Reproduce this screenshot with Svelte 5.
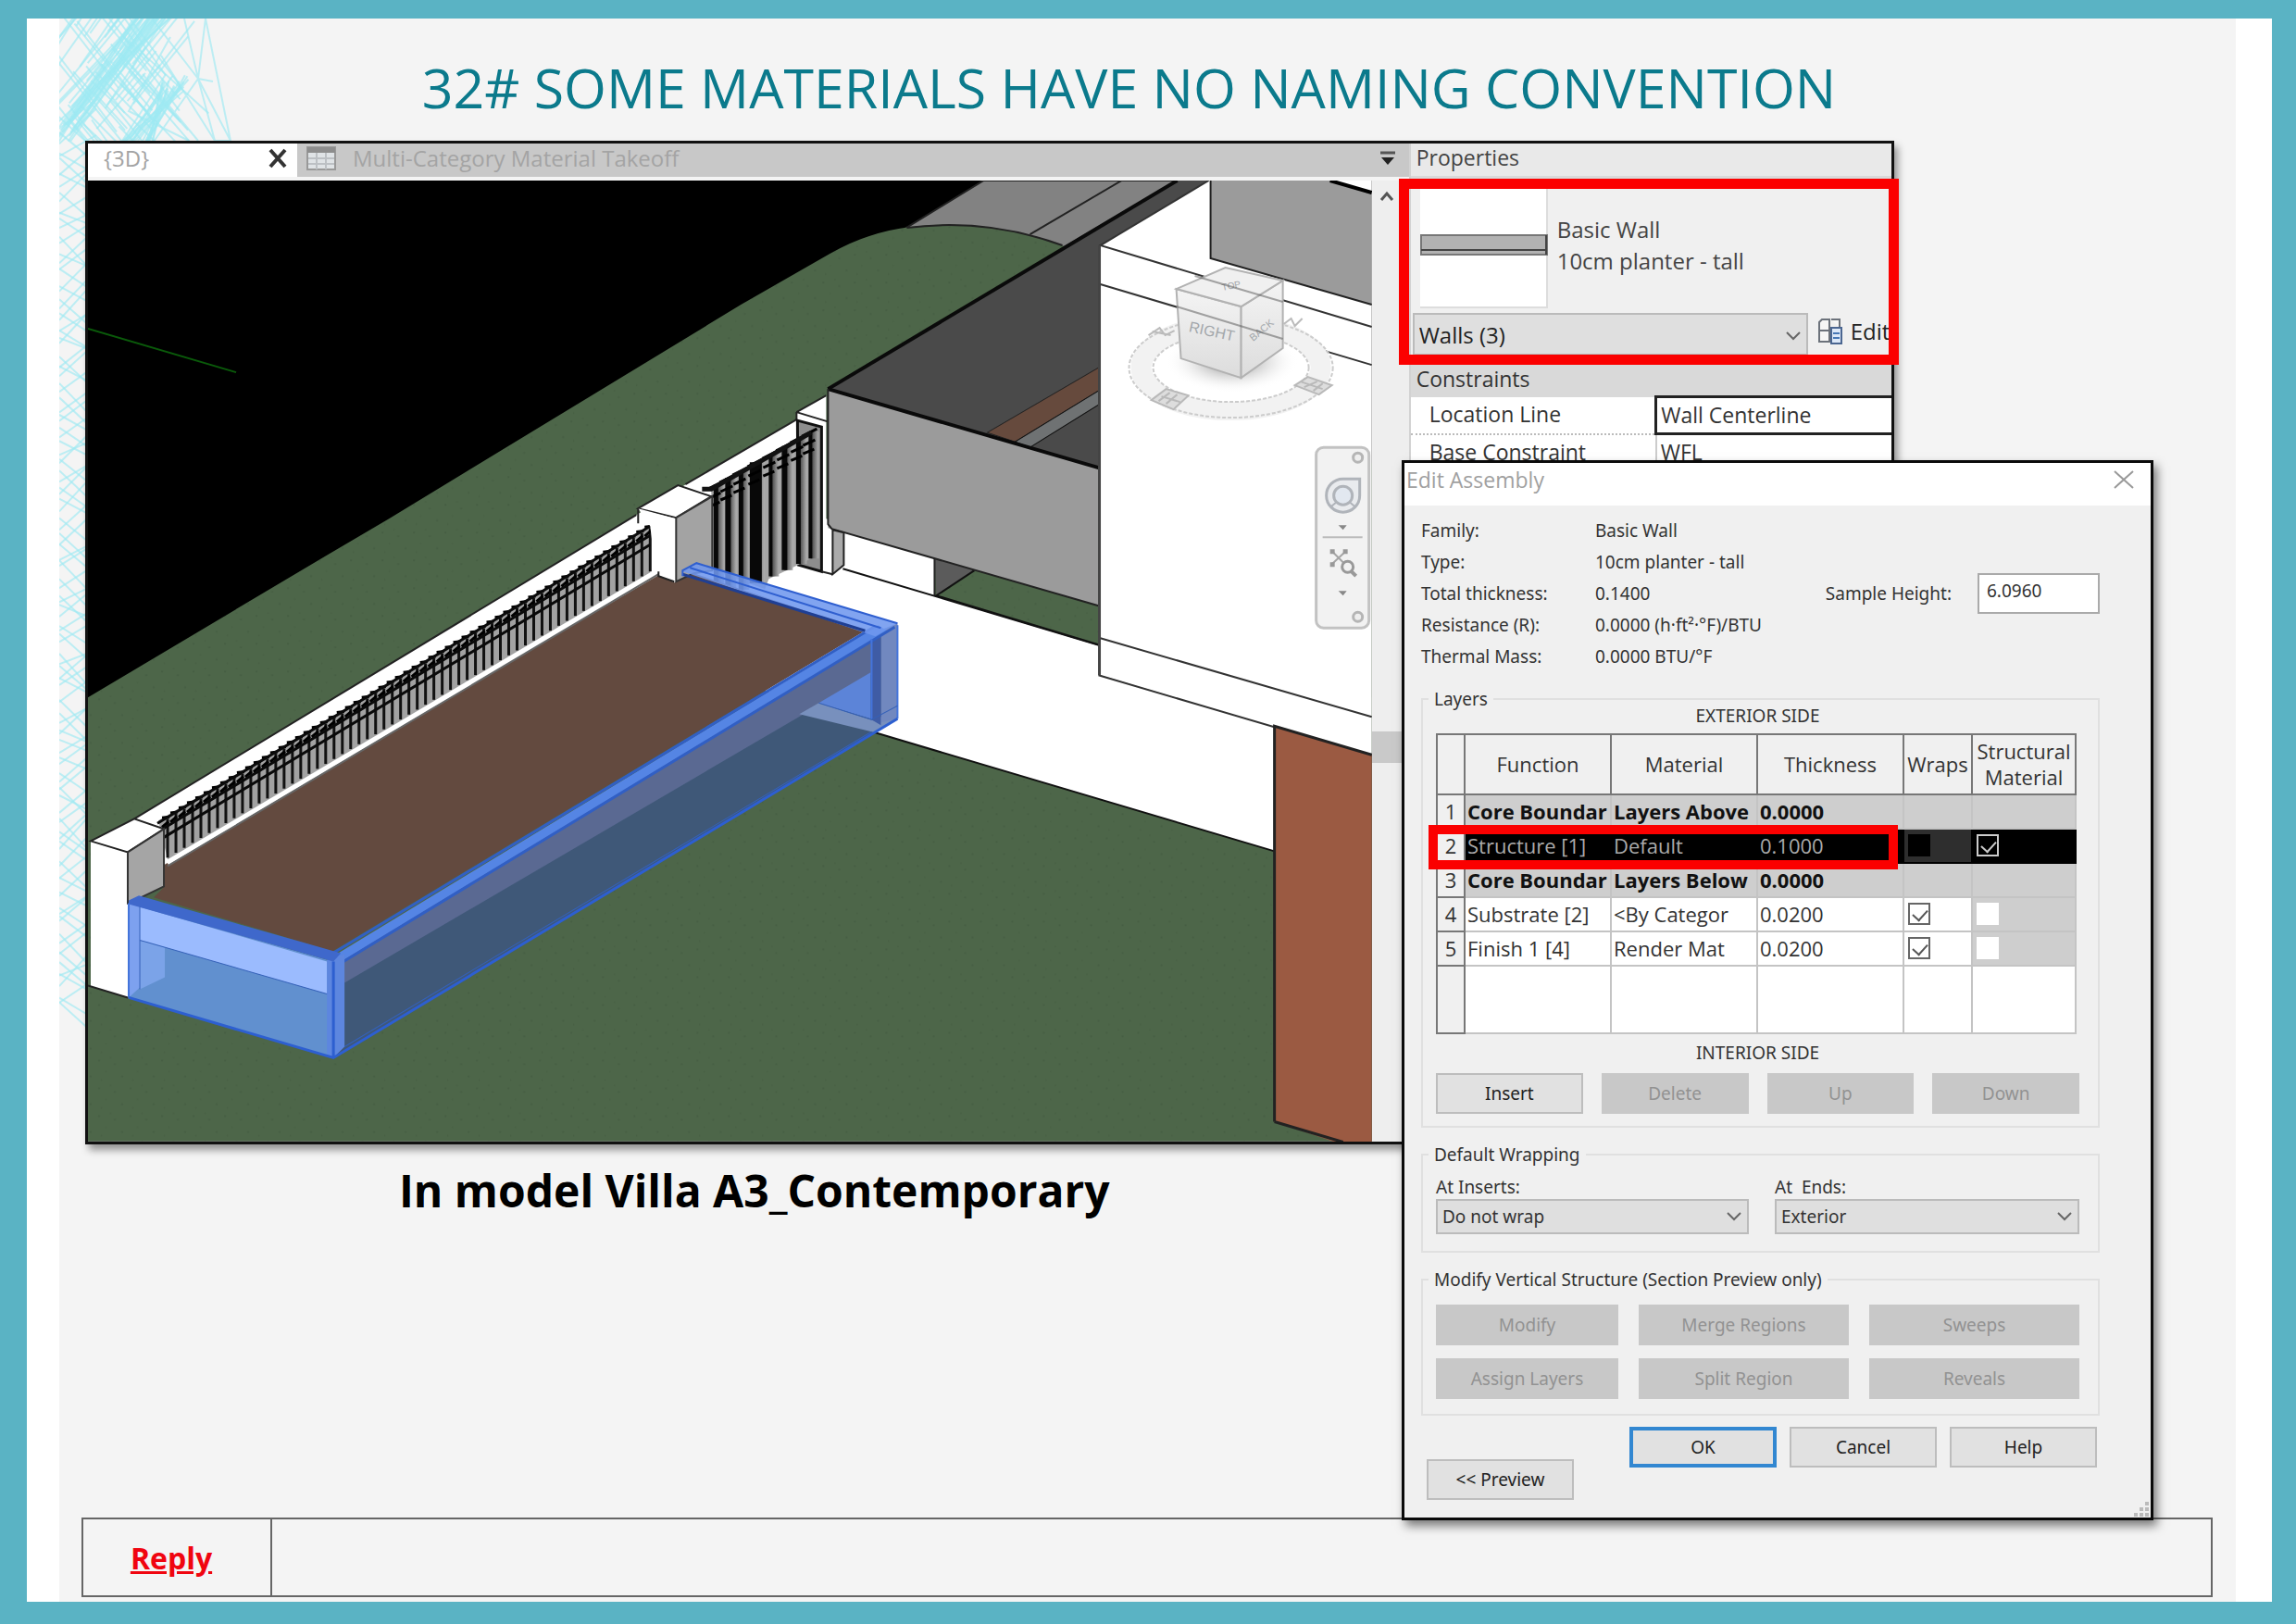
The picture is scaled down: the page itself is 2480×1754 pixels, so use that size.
<script>
  let wrapInserts = 'Do not wrap';
  let wrapEnds = 'Exterior';
  let category = 'Walls (3)';
  let sampleHeight = '6.0960';

  const info = [
    { label: 'Family:', value: 'Basic Wall' },
    { label: 'Type:', value: '10cm planter - tall' },
    { label: 'Total thickness:', value: '0.1400' },
    { label: 'Resistance (R):', value: '0.0000 (h·ft²·°F)/BTU' },
    { label: 'Thermal Mass:', value: '0.0000 BTU/°F' }
  ];

  const layers = [
    { id: 1, fn: 'Core Boundar', material: 'Layers Above', thickness: '0.0000', kind: 'core' },
    { id: 2, fn: 'Structure [1]', material: 'Default', thickness: '0.1000', kind: 'selected', wraps: false, structural: true },
    { id: 3, fn: 'Core Boundar', material: 'Layers Below', thickness: '0.0000', kind: 'core' },
    { id: 4, fn: 'Substrate [2]', material: '<By Categor', thickness: '0.0200', kind: 'plain', wraps: true, structural: false },
    { id: 5, fn: 'Finish 1 [4]', material: 'Render Mat', thickness: '0.0200', kind: 'plain', wraps: true, structural: false }
  ];

  const layerButtons = ['Insert', 'Delete', 'Up', 'Down'];
  const regionButtons = ['Modify', 'Merge Regions', 'Sweeps', 'Assign Layers', 'Split Region', 'Reveals'];

  // small repeatable generator for the decorative line mesh
  let seed = 11;
  const rnd = () => {
    seed = (seed * 16807) % 2147483647;
    return seed / 2147483647;
  };

  const mesh = [];
  for (let i = 0; i < 70; i++) {
    const x = rnd() * 100 - 20;
    const y = rnd() * 140 - 20;
    const len = 50 + rnd() * 80;
    const down = i % 2 ? 0.9 + rnd() * 0.5 : -1.1 - rnd() * 0.5;
    mesh.push([x, y, x + len * 0.7, y + len * down * 0.7]);
  }
  // two denser bundles crossing the corner
  for (let i = 0; i < 22; i++) {
    mesh.push([80 + rnd() * 40, 0, rnd() * 30 - 10, 90 + rnd() * 50]);
    mesh.push([110 + rnd() * 30, 60 + rnd() * 20, 60 + rnd() * 40, 140]);
  }
  for (let i = 0; i < 120; i++) {
    const y = 110 + i * 8 + rnd() * 12;
    const rise = (i % 2 ? 1 : -1) * (15 + rnd() * 30);
    mesh.push([0, y, 40, y + rise]);
  }

  // railing along the planter
  const rails = [];
  for (let i = 0; i <= 58; i++) {
    const t = i / 58;
    rails.push({ x: 181 + t * 521, top: 884 - t * 314, bottom: 926 - t * 309 });
  }

  // railing between the two far pillars
  const bars = [
    { x: 773, w: 5 },
    { x: 786, w: 6 },
    { x: 800, w: 5 },
    { x: 816, w: 13 },
    { x: 832, w: 4 },
    { x: 847, w: 6 },
    { x: 862, w: 5 },
    { x: 875, w: 4 }
  ].map((bar) => ({
    ...bar,
    top: 466 + (875 - bar.x) * 0.56,
    bottom: 603 + (875 - bar.x) * 0.45
  }));
</script>

<main class="page">
  <div class="sheet">
    <div class="slide">
      <svg class="mesh" viewBox="0 0 200 1160" aria-hidden="true">
        {#each mesh as [x1, y1, x2, y2]}
          <line {x1} {y1} {x2} {y2} />
        {/each}
        <path d="M135 0 L150 65 L168 132 L185 132 L158 0 L150 65 L185 132 M150 65 L90 150 M150 65 L166 68 M110 40 L168 132 M90 60 L150 132 M120 20 L75 100 L140 132 M150 65 L100 0" />
      </svg>

      <h1>32# SOME MATERIALS HAVE NO NAMING CONVENTION</h1>

      <section class="window" aria-label="Model view">
        <div class="view">
          <div class="tabs">
            <div class="tab active">
              <span>{'{3D}'}</span>
              <button class="close" aria-label="Close tab">
                <svg viewBox="0 0 22 22" width="22" height="22"><path d="M3 2 L19 20 M19 2 L3 20" /></svg>
              </button>
            </div>
            <div class="tab">
              <svg class="sheet-icon" viewBox="0 0 32 26" width="32" height="26">
                <rect x="1" y="1" width="30" height="24" fill="#dfe3e6" stroke="#999" stroke-width="2" />
                <rect x="1" y="1" width="30" height="6" fill="#8d8d8d" />
                <path d="M2 13 H30 M2 19 H30 M11 7 V25 M21 7 V25" stroke="#bcc0c4" stroke-width="2" />
              </svg>
              <span>Multi-Category Material Takeoff</span>
            </div>
            <button class="tab-menu" aria-label="Open tab list">
              <svg viewBox="0 0 18 18" width="18" height="18"><path d="M1 3 H17" stroke="#555" stroke-width="3" /><path d="M2 8 H16 L9 16 Z" fill="#222" /></svg>
            </button>
          </div>

          <div class="canvas">
            <svg class="scene" viewBox="95 195 1386 1037" preserveAspectRatio="xMidYMid slice" role="img" aria-label="3D view of villa with selected planter walls">
              <defs>
                <pattern id="grass" width="34" height="30" patternUnits="userSpaceOnUse">
                  <rect width="34" height="30" fill="#4d6649" />
                  <path d="M4 5h2M21 9h2M12 17h1M29 22h2M7 26h1M17 2h1" stroke="#465e43" stroke-width="2" />
                </pattern>
                <radialGradient id="shade">
                  <stop offset="0" stop-color="#777" />
                  <stop offset="1" stop-color="#fff" stop-opacity="0" />
                </radialGradient>
                <linearGradient id="face" x1="0" y1="0" x2="0" y2="1">
                  <stop offset="0" stop-color="#f4f4f4" />
                  <stop offset="1" stop-color="#dcdcdc" />
                </linearGradient>
                <linearGradient id="post" x1="0" y1="0" x2="1" y2="0">
                  <stop offset="0" stop-color="#333" />
                  <stop offset="1" stop-color="#b0b0b0" />
                </linearGradient>
              </defs>

              <rect x="95" y="195" width="1386" height="1037" fill="#000" />
              <path d="M95 355 L255 402" stroke="#0a5a0a" stroke-width="2" />

              <!-- lawn and road -->
              <path d="M1089 195 L975 248 L1147 268 L1271 195 Z" fill="#828282" />
              <path d="M1062 195 L975 248 L1147 268 L1271 195 Z" fill="#828282" stroke="#222" stroke-width="2" />
              <path d="M1211 195 L1112 253" stroke="#222" stroke-width="2" />
              <path d="M95 753 L352 600 L420 560 L800 329 L896 274 Q938 250 984 245 Q1065 235 1147 265 L1220 300 L1481 500 V1232 H95 Z" fill="url(#grass)" />
              <path d="M979 246 Q1065 235 1147 265" fill="none" stroke="#222" stroke-width="2" />

              <!-- roof recess -->
              <path d="M1271 195 H1305 L1188 265 L1188 505 L894 420 Z" fill="#4a4a4a" />
              <path d="M1271 195 L894 420" stroke="#0a0a0a" stroke-width="4" />
              <path d="M1066 467 L1186 397 V422 L1096 477 Z" fill="#664a3d" stroke="#222" />
              <path d="M1096 477 L1186 422 V437 L1112 483 Z" fill="#6f7273" stroke="#111" />

              <!-- boundary wall -->
              <path d="M740 523 L860 453 V445 L892 427 V560 L1009 600 V643 L1188 697 V729 L1376 784 V919 L945 791 L760 720 Z" fill="#fff" />
              <path d="M145 884 L687 556 L742 522 V640 L177 940 Z" fill="#fff" />
              <path d="M145 884 L687 556 M740 523 L860 453 M860 445 L892 427" stroke="#222" stroke-width="2" />
              <path d="M910 614 L1188 697 M945 791 L1376 919" stroke="#111" stroke-width="2" />
              <path d="M1009 600 L1060 612 L1011 643 Z" fill="#5b5b5b" />
              <path d="M1009 600 V643" stroke="#222" stroke-width="2" />
              <path d="M1052 616 L1090 620 L1186 655 V696 L1011 643 Z" fill="url(#grass)" />
              <path d="M1052 616 L1011 643 L1186 696" fill="none" stroke="#111" stroke-width="2" />

              <path d="M894 420 L1186 505 V654 L894 570 Z" fill="#9b9b9b" />
              <path d="M894 420 L1186 505" stroke="#0a0a0a" stroke-width="4" />
              <path d="M894 420 V566 L898 571 L1186 654" fill="none" stroke="#222" stroke-width="2" />

              <!-- far railing -->
              <path d="M860 445 L893 455 M860 445 V453" stroke="#222" stroke-width="2" />
              <path d="M861 454 L887 461 V617 L862 610 Z" fill="#8d8d8d" stroke="#111" stroke-width="3" />
              <path d="M899 572 L911 575 V610 L899 620 Z" fill="#aaa" stroke="#222" stroke-width="2" />
              <path d="M887 617 L899 620" stroke="#222" stroke-width="2" />
              <path d="M768 528 L876 466 V603 L830 625 L826 636 L768 615 Z" fill="#a6a6a6" />
              {#each bars as bar}
                <rect x={bar.x} y={bar.top} width="9" height={bar.bottom - bar.top} fill="url(#post)" />
                <path d="M{bar.x} {bar.top} V{bar.bottom}" stroke="#080808" stroke-width={bar.w} />
                <path d="M{bar.x - 9} {bar.top + 5} l16 -8 M{bar.x - 8} {bar.top + 15} l13 -6 M{bar.x - 8} {bar.top + 24} l12 -5" stroke="#000" stroke-width="3" />
              {/each}
              <path d="M758 528 L768 528 L876 467" fill="none" stroke="#111" stroke-width="5" />

              <!-- right block -->
              <path d="M1188 265 L1305 195 H1481 V816 L1188 729 Z" fill="#fff" />
              <path d="M1307 195 H1436 L1481 208 V329 L1307 279 Z" fill="#9b9b9b" />
              <path d="M1307 195 V279 L1481 329" fill="none" stroke="#222" stroke-width="2" />
              <path d="M1436 195 L1481 208" stroke="#000" stroke-width="4" />
              <path d="M1305 195 L1188 265 L1481 353 M1188 307 L1481 394 M1188 689 L1481 774 M1186 729 L1481 816" fill="none" stroke="#333" stroke-width="2" />
              <path d="M1187 265 V729" stroke="#444" stroke-width="3" />
              <path d="M1376 784 L1481 815 V1240 H1462 L1376 1211 Z" fill="#9b5a42" />
              <path d="M1376 1211 V784 L1481 815 M1376 1211 L1450 1233" fill="none" stroke="#222" stroke-width="3" />

              <!-- soil and near railing -->
              <path d="M177 958 V934 L711 621 L728 629 L749 619 L934 681 L359 1027 L166 969 Z" fill="#634a3f" />
              <path d="M171 886 L702 568 V618 L181 928 Z" fill="#a2a2a2" />
              {#each rails as rail}
                <path d="M{rail.x} {rail.top} V{rail.bottom}" stroke="#111" stroke-width="3" />
                <path d="M{rail.x - 6} {rail.top - 1} l8 -1 M{rail.x - 6} {rail.top + 9} l7 -6" stroke="#000" stroke-width="3" />
              {/each}
              <path d="M170 889 L702 568 M174 896 L702 578 M177 904 L702 588" stroke="#0a0a0a" stroke-width="3" />
              <path d="M181 932 L711 617" stroke="#fff" stroke-width="4" />
              <path d="M181 935 L711 620" stroke="#666" stroke-width="2" />

              <path d="M689 549 L732 524 L768 536 L730 559 Z" fill="#fff" stroke="#222" stroke-width="2" />
              <path d="M689 549 L730 560 V628 L708 617 L702 568 Z" fill="#fff" />
              <path d="M730 559 L769 536 V616 L749 619 L730 628 Z" fill="#a3a3a3" stroke="#333" stroke-width="2" />
              <path d="M689 549 V565 M711 617 V622 L728 628" fill="none" stroke="#222" stroke-width="2" />

              <path d="M98 908 L138 920 V1077 L98 1065 Z" fill="#fff" />
              <path d="M98 908 L145 884 L177 895 L138 920 Z" fill="#fff" stroke="#222" stroke-width="2" />
              <path d="M138 920 L177 895 V957 L150 970 L138 975 Z" fill="#a5a5a5" stroke="#333" stroke-width="2" />
              <path d="M95 1064 L138 1077" stroke="#222" stroke-width="2" />

              <!-- selected planter -->
              <path d="M360 1038 L969 675 V776 L360 1142 Z" fill="#3f5878" />
              <path d="M370 1034 L943 692 V727 L372 1061 Z" fill="#5a6992" />
              <path d="M884 759 L940 726 V776 Z" fill="#5c84d8" />
              <path d="M863 771 L884 759 L943 778 L969 765 V776 L945 791 Z" fill="#7890bd" />
              <path d="M951 680 L969 673 V776 L951 780 Z" fill="#7188bf" />
              <path d="M941 687 H951 V783 L941 777 Z" fill="#3f5ca5" />
              <path d="M357 1034 L948 675 L958 681 L362 1042 Z" fill="#5585e4" />
              <path d="M358 1030 L945 676 M366 1041 L966 677" stroke="#315fc4" stroke-width="3" />
              <path d="M737 617 L752 608 L969 673 L945 687 Z" fill="#6f97ee" opacity=".88" />
              <path d="M737 620 L934 681" stroke="#1f3f94" stroke-width="3" />
              <path d="M737 622 V616 L752 608 L969 673 M745 613 L951 678" fill="none" stroke="#2f5fd0" stroke-width="2" />
              <path d="M139 975 L360 1038 V1142 L139 1077 Z" fill="#6190cf" />
              <path d="M139 975 L151 979 V1066 L139 1077 Z" fill="#7da1ef" />
              <path d="M151 1015 L178 1023 V1055 L151 1068 Z" fill="#7ba3e8" />
              <path d="M151 979 L353 1038 V1073 L151 1015 Z" fill="#9bbbfe" />
              <path d="M353 1036 L372 1030 V1130 L360 1142 L353 1138 Z" fill="#5d86df" />
              <path d="M139 972 L150 967 L368 1029 L360 1038 L139 976 Z" fill="#3f68cb" />
              <path d="M139 975 V1077 M969 776 V675 M941 690 V777" fill="none" stroke="#4474dc" stroke-width="2" />
              <path d="M139 1077 L360 1142 L969 776 M360 1038 V1142" fill="none" stroke="#2d5fd0" stroke-width="3" />
              <path d="M372 1130 L941 790 M151 979 V1068 M353 1073 L151 1015 M884 759 L941 777 L969 762" fill="none" stroke="#3561b8" stroke-width="1" />

              <!-- view cube -->
              <ellipse cx="1329" cy="397" rx="97" ry="46" fill="none" stroke="#f2f2f2" stroke-width="22" />
              <ellipse cx="1329" cy="397" rx="110" ry="54" fill="none" stroke="#ccc" stroke-width="2" stroke-dasharray="4 2" />
              <ellipse cx="1329" cy="397" rx="84" ry="37" fill="#fff" stroke="#ccc" stroke-width="2" stroke-dasharray="4 2" />
              <ellipse cx="1330" cy="390" rx="72" ry="34" fill="url(#shade)" />
              <path d="M1270 312 L1340 331 V408 L1275 387 Z" fill="url(#face)" stroke="#b2b2b2" stroke-width="2" />
              <path d="M1340 331 L1385 303 V376 L1340 408 Z" fill="url(#face)" stroke="#b2b2b2" stroke-width="2" />
              <path d="M1270 312 L1323 289 L1385 303 L1340 331 Z" fill="#f0f0f0" stroke="#b2b2b2" stroke-width="2" />
              <text class="cube" x="1283" y="358" font-size="16" transform="rotate(12 1283 358)">RIGHT</text>
              <text class="cube" x="1353" y="369" font-size="11" transform="rotate(-40 1353 369)">BACK</text>
              <text class="cube" x="1320" y="314" font-size="10" transform="rotate(-12 1320 314)">TOP</text>
              <path d="M1240 362 l12 -8 6 8 10 -5 M1244 358 l20 4 M1386 350 l8 -6 4 8 8 -8" fill="none" stroke="#bbb" stroke-width="2" />
              <path d="M1243 432 L1259 420 L1283 427 L1267 442 Z M1251 433 l12 -9 M1259 436 l12 -10 M1254 428 l20 6" fill="#ddd" stroke="#b9b9b9" stroke-width="2" />
              <path d="M1398 416 L1412 407 L1438 416 L1424 426 Z M1408 418 l14 -6 M1418 422 l10 -8 M1404 412 l24 8" fill="#ddd" stroke="#b9b9b9" stroke-width="2" />
              <path d="M1270 331 L1385 366 M1290 298 L1385 326" stroke="#555" stroke-width="2" opacity=".5" />

              <!-- navigation bar -->
              <rect x="1421" y="483" width="57" height="195" rx="8" fill="#f2f2f2" stroke="#c2c2c2" stroke-width="3" />
              <circle cx="1466" cy="494" r="5" fill="#eee" stroke="#b5b5b5" stroke-width="3" />
              <circle cx="1466" cy="666" r="5" fill="#eee" stroke="#b5b5b5" stroke-width="3" />
              <path d="M1450 517 H1468 V535 A18 18 0 1 1 1450 517 Z" fill="#e9ebee" stroke="#b0b4ba" stroke-width="3" />
              <circle cx="1450" cy="535" r="10" fill="#e2e8f0" stroke="#b0b4ba" stroke-width="3" />
              <path d="M1437 547 l6 -5 M1463 547 l-6 -5" stroke="#b0b4ba" stroke-width="2" />
              <path d="M1445 567 h9 l-4 5 Z M1445 638 h9 l-4 5 Z" fill="#888" />
              <path d="M1428 580 H1471" stroke="#bbb" stroke-width="2" />
              <path d="M1439 596 L1452 609 M1452 596 L1438 609" stroke="#a5a5a5" stroke-width="2" />
              <path d="M1436 593h5v5h-5z M1450 593h5v5h-5z M1436 607h5v5h-5z" fill="#999" />
              <circle cx="1455" cy="612" r="6" fill="#f2f2f2" stroke="#999" stroke-width="3" />
              <path d="M1459 617 L1464 622" stroke="#999" stroke-width="4" />
            </svg>

            <div class="scroll">
              <button aria-label="Scroll up">
                <svg viewBox="0 0 16 12" width="16" height="12"><path d="M2 10 L8 3 L14 10" /></svg>
              </button>
              <span class="thumb"></span>
            </div>
          </div>
        </div>

        <aside class="properties">
          <h2>Properties</h2>
          <div class="type-block">
            <div class="type">
              <svg viewBox="0 0 138 136" width="138" height="136" aria-hidden="true">
                <rect width="138" height="136" fill="#fff" />
                <path d="M137 0 V135 H0" fill="none" stroke="#ddd" stroke-width="2" />
                <rect x="1" y="57" width="136" height="21" fill="#b2b2b2" stroke="#777" stroke-width="2" />
                <path d="M1 73 H137 M136 57 V78" stroke="#444" stroke-width="2" />
              </svg>
              <p>Basic Wall<br />10cm planter - tall</p>
            </div>
            <div class="category">
              <div class="pick">
                <select aria-label="Category" bind:value={category}>
                  <option>Walls (3)</option>
                </select>
                <svg viewBox="0 0 16 10" width="16" height="10"><path d="M1 1 L8 8 L15 1" /></svg>
              </div>
              <button class="edit-type">
                <svg viewBox="0 0 28 28" width="28" height="28">
                  <path d="M2 13 V4 L5 1 H13 V13 Z M15 1 H24 V10 M2 13 V25 H13 V13" fill="#f6f6f6" stroke="#6c727b" stroke-width="2" />
                  <rect x="15" y="10" width="11" height="17" fill="#dce8f8" stroke="#4b6691" stroke-width="2" />
                  <path d="M17 16 H24 M17 21 H24" stroke="#4777b5" stroke-width="2" />
                </svg>
                Edit
              </button>
            </div>
          </div>
          <table class="props">
            <colgroup><col class="c-name" /><col /></colgroup>
            <thead>
              <tr><th colspan="2">Constraints</th></tr>
            </thead>
            <tbody>
              <tr><td>Location Line</td><td class="focus">Wall Centerline</td></tr>
              <tr><td>Base Constraint</td><td>WFL</td></tr>
            </tbody>
          </table>
        </aside>
      </section>

      <p class="caption">In model Villa A3_Contemporary</p>

      <section class="dialog" aria-label="Edit Assembly">
        <header>
          <h2>Edit Assembly</h2>
          <button aria-label="Close">
            <svg viewBox="0 0 22 20" width="22" height="20"><path d="M1 1 L21 19 M21 1 L1 19" /></svg>
          </button>
        </header>

        <div class="body">
          <div class="summary">
            <dl>
              {#each info as row}
                <dt>{row.label}</dt>
                <dd>{row.value}</dd>
              {/each}
            </dl>
            <label>Sample Height: <input type="text" bind:value={sampleHeight} /></label>
          </div>

          <fieldset class="layers">
            <legend>Layers</legend>
            <p class="side">EXTERIOR SIDE</p>
            <div class="grid-wrap">
              <table class="grid">
                <colgroup>
                  <col class="c-id" /><col class="c-wide" /><col class="c-wide" /><col class="c-wide" /><col class="c-wraps" /><col />
                </colgroup>
                <thead>
                  <tr>
                    <th></th><th>Function</th><th>Material</th><th>Thickness</th><th>Wraps</th><th>Structural Material</th>
                  </tr>
                </thead>
                <tbody>
                  {#each layers as layer}
                    <tr class={layer.kind}>
                      <th>{layer.id}</th>
                      <td>{layer.fn}</td>
                      <td>{layer.material}</td>
                      <td>{layer.thickness}</td>
                      <td class="wraps">
                        {#if layer.kind !== 'core'}
                          <input type="checkbox" aria-label="Wraps, layer {layer.id}" bind:checked={layer.wraps} />
                        {/if}
                      </td>
                      <td class="structural">
                        {#if layer.kind !== 'core'}
                          <input type="checkbox" aria-label="Structural material, layer {layer.id}" bind:checked={layer.structural} />
                        {/if}
                      </td>
                    </tr>
                  {/each}
                  <tr class="empty"><th></th><td></td><td></td><td></td><td></td><td></td></tr>
                </tbody>
              </table>
              <span class="marker"></span>
            </div>
            <p class="side">INTERIOR SIDE</p>
            <div class="row four">
              {#each layerButtons as name, i}
                <button class="btn" disabled={i > 0}>{name}</button>
              {/each}
            </div>
          </fieldset>

          <fieldset class="wrapping">
            <legend>Default Wrapping</legend>
            <div class="row two">
              <div class="field">
                <label for="at-inserts">At Inserts:</label>
                <div class="pick">
                  <select id="at-inserts" bind:value={wrapInserts}><option>Do not wrap</option></select>
                  <svg viewBox="0 0 16 10" width="16" height="10"><path d="M1 1 L8 8 L15 1" /></svg>
                </div>
              </div>
              <div class="field">
                <label for="at-ends">At&nbsp; Ends:</label>
                <div class="pick">
                  <select id="at-ends" bind:value={wrapEnds}><option>Exterior</option></select>
                  <svg viewBox="0 0 16 10" width="16" height="10"><path d="M1 1 L8 8 L15 1" /></svg>
                </div>
              </div>
            </div>
          </fieldset>

          <fieldset class="vertical">
            <legend>Modify Vertical Structure (Section Preview only)</legend>
            <div class="row three">
              {#each regionButtons as name}
                <button class="btn" disabled>{name}</button>
              {/each}
            </div>
          </fieldset>

          <footer>
            <button class="btn preview">&lt;&lt; Preview</button>
            <div class="actions">
              <button class="btn ok">OK</button>
              <button class="btn">Cancel</button>
              <button class="btn">Help</button>
            </div>
          </footer>
        </div>
        <svg class="grip" viewBox="0 0 18 18" width="18" height="18" aria-hidden="true">
          <path d="M12 1h4v4h-4z M12 7h4v4h-4z M6 7h4v4h-4z M12 13h4v4h-4z M6 13h4v4h-4z M0 13h4v4h-4z" fill="#bbb" />
        </svg>
      </section>

      <table class="reply">
        <tbody>
          <tr>
            <td><a href="#reply">Reply</a></td>
            <td></td>
          </tr>
        </tbody>
      </table>
    </div>
  </div>
</main>

<style>
  :global(body) {
    background: #5ab3c4;
  }

  .page {
    box-sizing: border-box;
    min-height: 100vh;
    padding: 20px 26px 24px 29px;
    display: flex;
    font-family: 'Open Sans', 'Noto Sans', sans-serif;
    color: #222;
  }

  .page :global(*) {
    box-sizing: border-box;
  }

  .sheet {
    flex: 1;
    display: flex;
    padding: 0 39px 0 35px;
    background: #fff;
  }

  .slide {
    position: relative;
    flex: 1;
    min-width: 0;
    display: flex;
    flex-direction: column;
    background: #f4f4f4;
  }

  h1,
  h2,
  p,
  dl,
  dd {
    margin: 0;
  }

  button,
  input,
  select {
    font: inherit;
    color: inherit;
  }

  .mesh {
    position: absolute;
    top: 0;
    left: 0;
    width: 200px;
    stroke: #9eeaf3;
    stroke-opacity: 0.65;
    stroke-width: 2;
    fill: none;
  }

  h1 {
    position: relative;
    padding: 18px 40px 2px 0;
    font-size: 59px;
    font-weight: 400;
    line-height: 112px;
    text-align: center;
    color: #0b7a8c;
  }

  .window {
    position: relative;
    width: 83.1%;
    margin-left: 28px;
    display: flex;
    border: 3px solid #111;
    background: #fff;
    box-shadow: 4px 6px 8px rgba(0, 0, 0, 0.4);
    font-size: 24px;
  }

  .view {
    flex: 1;
    min-width: 0;
  }

  .tabs {
    display: flex;
    height: 40px;
    background: #c8c8c8;
    border-bottom: 4px solid #f4f4f4;
    line-height: 32px;
    color: #a4a4a4;
  }

  .tab {
    display: flex;
    align-items: center;
    gap: 18px;
    padding: 0 0 4px 10px;
  }

  .tab.active {
    width: 226px;
    padding: 0 10px 4px 17px;
    justify-content: space-between;
    background: #fff;
  }

  .close,
  .tab-menu,
  .scroll button,
  .edit-type,
  header button {
    padding: 0;
    border: 0;
    background: none;
    line-height: 0;
  }

  .close svg {
    stroke: #333;
    stroke-width: 4;
  }

  .tab-menu {
    margin-left: auto;
    padding: 0 14px 4px 0;
  }

  .canvas {
    display: flex;
  }

  .scene {
    display: block;
    flex: 1;
    min-width: 0;
    aspect-ratio: 1386 / 1037;
  }

  .cube {
    font-family: 'Liberation Sans', Arial, sans-serif;
    fill: #a2a6aa;
  }

  .scroll {
    width: 40px;
    display: flex;
    flex-direction: column;
    background: #eee;
  }

  .scroll button {
    height: 34px;
    margin-bottom: 561px;
    padding-right: 8px;
  }

  .scroll svg {
    fill: none;
    stroke: #555;
    stroke-width: 3;
  }

  .thumb {
    height: 34px;
    background: #c9c9c9;
  }

  .properties {
    width: 521px;
    border-left: 2px solid #d2d2d2;
    background: #f0f0f0;
    color: #444;
  }

  .properties h2 {
    height: 38px;
    padding-left: 6px;
    border-bottom: 3px solid #d9d9d9;
    background: #e9e9e9;
    font-size: 23px;
    font-weight: 400;
    line-height: 30px;
  }

  .type-block {
    position: relative;
    height: 201px;
  }

  .type-block::after {
    content: '';
    position: absolute;
    inset: 0 -8px 0 -13px;
    border: 11px solid #fb0000;
  }

  .type {
    display: flex;
    align-items: center;
    gap: 10px;
    padding: 4px 0 5px 10px;
  }

  .type p {
    line-height: 34px;
  }

  .category {
    display: flex;
    gap: 10px;
    padding-left: 2px;
    overflow: hidden;
  }

  .pick {
    position: relative;
    flex: 1;
  }

  .pick select {
    display: block;
    width: 100%;
    height: 38px;
    padding: 0 5px;
    appearance: none;
    border: 2px solid #bbb;
    border-radius: 0;
    background: #dfdfdf;
  }

  .pick svg {
    position: absolute;
    right: 8px;
    top: 14px;
    fill: none;
    stroke: #666;
    stroke-width: 2;
  }

  .category .pick {
    flex: 0 0 427px;
  }

  .category select {
    height: 46px;
    color: #222;
  }

  .category .pick svg {
    top: 20px;
  }

  .edit-type {
    display: flex;
    align-items: center;
    gap: 8px;
    padding-bottom: 6px;
    color: #222;
  }

  .props {
    width: 100%;
    border-collapse: collapse;
    table-layout: fixed;
    font-size: 23px;
    line-height: 30px;
    background: #fff;
    color: #333;
  }

  .c-name {
    width: 265px;
  }

  .props th {
    height: 33px;
    padding: 0 6px 3px;
    background: #d9d9d9;
    font-weight: 400;
    text-align: left;
  }

  .props td {
    height: 40px;
    padding: 0 4px 2px;
    border-bottom: 2px dotted #bbb;
  }

  .props td:first-child {
    padding-left: 20px;
    border-right: 2px solid #ccc;
  }

  .props td.focus {
    border: 3px solid #222;
    border-right: 0;
  }

  .caption {
    width: 61.4%;
    margin: 17px 0 0 29px;
    font-size: 48px;
    font-weight: 700;
    line-height: 66px;
    text-align: center;
    color: #000;
  }

  .dialog {
    position: absolute;
    top: 477px;
    right: 89px;
    width: 812px;
    border: 3px solid #0a0a0a;
    background: #f0f0f0;
    box-shadow: 4px 6px 10px rgba(0, 0, 0, 0.5);
    font-family: 'Noto Sans', 'Open Sans', sans-serif;
    font-size: 19px;
    line-height: 26px;
    color: #333;
  }

  header {
    display: flex;
    justify-content: space-between;
    height: 46px;
    padding: 0 18px 10px 2px;
    align-items: center;
    background: #fff;
  }

  header h2 {
    font-family: 'Open Sans', sans-serif;
    font-size: 23px;
    font-weight: 400;
    color: #a0a0a0;
  }

  header svg {
    stroke: #999;
    stroke-width: 2;
  }

  .body {
    padding: 10px 55px 19px 18px;
  }

  .summary {
    position: relative;
    display: flex;
    justify-content: space-between;
    align-items: center;
  }

  dl {
    display: grid;
    grid-template-columns: 188px auto;
    line-height: 34px;
  }

  .summary label {
    display: flex;
    align-items: center;
    gap: 28px;
  }

  .summary input {
    width: 132px;
    height: 44px;
    padding: 0 8px 6px;
    border: 2px solid #aaa;
    background: #fff;
  }

  fieldset {
    position: relative;
    margin: 0;
    padding: 0 20px 0 14px;
    min-width: 0;
    border: 2px solid #e0e0e0;
  }

  legend {
    margin-left: -8px;
    padding: 0 6px;
  }

  .layers {
    margin-top: 16px;
    padding-bottom: 13px;
  }

  .side {
    text-align: center;
    line-height: 26px;
  }

  .layers .side:first-of-type {
    margin: -8px 0 6px;
  }

  .grid-wrap {
    position: relative;
  }

  .grid {
    width: 692px;
    border-collapse: collapse;
    table-layout: fixed;
    font-family: 'Open Sans', sans-serif;
    font-size: 22px;
    line-height: 28px;
    color: #333;
  }

  .c-id {
    width: 30px;
  }

  .c-wide {
    width: 158px;
  }

  .c-wraps {
    width: 74px;
  }

  .grid th,
  .grid td {
    height: 37px;
    padding: 0 2px 2px;
    border: 2px solid #c4c4c4;
    white-space: nowrap;
    overflow: hidden;
  }

  .grid thead th {
    height: 65px;
    border-color: #777;
    font-weight: 400;
    white-space: normal;
  }

  .grid tbody th {
    border-color: #777;
    font-weight: 400;
  }

  .grid td {
    background: #fff;
  }

  .grid .core td {
    background: #cecece;
    color: #111;
    font-weight: 700;
  }

  .grid .selected td {
    background: #000;
    border-color: #000;
    color: #aaa;
  }

  .grid .selected .wraps {
    background: #2e2e2e;
  }

  .grid .plain .structural {
    background: #cecece;
  }

  .grid .empty td {
    height: 73px;
  }

  .grid input {
    display: block;
    position: relative;
    appearance: none;
    width: 24px;
    height: 24px;
    margin: 0 2px;
    background: #fff;
  }

  .grid .selected input {
    background: #000;
  }

  .grid input:checked {
    border: 2px solid #666;
  }

  .grid input:checked::after {
    content: '';
    position: absolute;
    top: 2px;
    left: 6px;
    width: 8px;
    height: 13px;
    border: solid #555;
    border-width: 0 2px 2px 0;
    transform: rotate(42deg);
  }

  .grid .selected input:checked,
  .grid .selected input:checked::after {
    border-color: #ccc;
  }

  .marker {
    position: absolute;
    top: 99px;
    left: -8px;
    width: 507px;
    height: 48px;
    border: 10px solid #fb0000;
  }

  .layers .side:last-of-type {
    margin: 7px 0 9px;
  }

  .row {
    display: grid;
    column-gap: 20px;
  }

  .four {
    grid-template-columns: repeat(4, 1fr);
  }

  .two {
    grid-template-columns: 338px 1fr;
    column-gap: 28px;
  }

  .three {
    grid-template-columns: 197px 1fr 1fr;
    column-gap: 22px;
    row-gap: 14px;
  }

  .btn {
    height: 44px;
    padding: 0;
    border: 2px solid #bdbdbd;
    background: #e1e1e1;
    color: #222;
  }

  .btn:disabled {
    border-color: #c8c8c8;
    background: #c8c8c8;
    color: #929292;
  }

  .wrapping,
  .vertical {
    margin-top: 16px;
  }

  .wrapping {
    padding-bottom: 18px;
  }

  .field {
    margin-top: 9px;
  }

  .vertical {
    padding-top: 14px;
    padding-bottom: 16px;
  }

  footer {
    display: flex;
    justify-content: space-between;
    padding: 12px 3px 0 6px;
  }

  footer .btn {
    width: 159px;
  }

  .preview {
    margin-top: 35px;
  }

  .actions {
    display: flex;
    gap: 14px;
  }

  .ok {
    border: 4px solid #3287d1;
  }

  .grip {
    position: absolute;
    right: 0;
    bottom: 0;
  }

  .reply {
    width: calc(100% - 49px);
    margin: auto 25px 5px 24px;
    border-collapse: collapse;
  }

  .reply td {
    height: 84px;
    padding: 0 12px 0 0;
    border: 2px solid #666;
    text-align: center;
  }

  .reply td:first-child {
    width: 204px;
  }

  .reply a {
    font-size: 32px;
    font-weight: 700;
    color: #f00510;
  }
</style>
